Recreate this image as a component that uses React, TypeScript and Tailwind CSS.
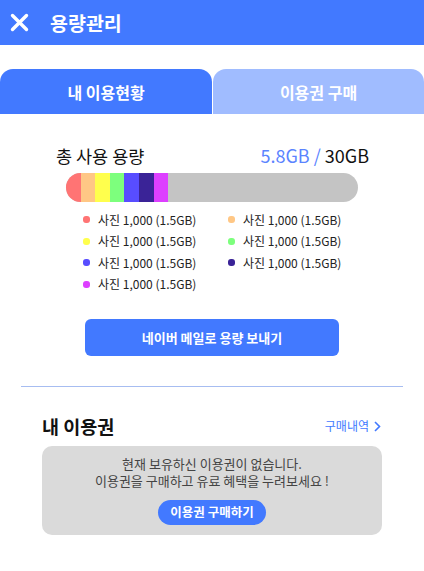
const segments = ["#FF7474", "#FFC785", "#FFFF4D", "#7DFF7D", "#584DFF", "#3A2397", "#DD3FFF"]

const legend = [
  { color: "#FF7474", label: "사진 1,000 (1.5GB)" },
  { color: "#FFC785", label: "사진 1,000 (1.5GB)" },
  { color: "#FFFF4D", label: "사진 1,000 (1.5GB)" },
  { color: "#7DFF7D", label: "사진 1,000 (1.5GB)" },
  { color: "#584DFF", label: "사진 1,000 (1.5GB)" },
  { color: "#3A2397", label: "사진 1,000 (1.5GB)" },
  { color: "#DD3FFF", label: "사진 1,000 (1.5GB)" },
]

export default function App() {
  return (
    <div className="w-[424px] h-[571px] bg-white font-['Noto_Sans_CJK_KR','Noto_Sans',sans-serif] text-[#111]">
      {/* header */}
      <div className="h-[45px] bg-[#4279FF] flex items-center px-[10px]">
        <svg width="19" height="19" viewBox="0 0 19 19" className="shrink-0">
          <path d="M2.5 2.5 L16.5 16.5 M16.5 2.5 L2.5 16.5" stroke="white" strokeWidth="3.4" strokeLinecap="round" />
        </svg>
        <span className="ml-[21px] text-white text-[19.5px] font-bold leading-none">용량관리</span>
      </div>

      {/* tabs */}
      <div className="mt-[24px] flex gap-px">
        <div className="w-[212px] h-[45px] rounded-t-[13px] bg-[#4279FF] flex items-center justify-center text-white text-[16px] font-bold">
          내 이용현황
        </div>
        <div className="flex-1 h-[45px] rounded-t-[13px] bg-[#A0BCFF] flex items-center justify-center text-white text-[16px] font-bold">
          이용권 구매
        </div>
      </div>

      {/* usage */}
      <div className="px-[56px] pt-[32px] flex items-end justify-between leading-none">
        <span className="text-[17.5px]">총 사용 용량</span>
        <span className="text-[18px] mr-[-1px]">
          <span className="text-[#5B84FF]">5.8GB / </span>30GB
        </span>
      </div>
      <div className="ml-[66px] mt-[9px] w-[292px] h-[29px] rounded-full bg-[#C4C4C4] overflow-hidden flex">
        {segments.map((c) => (
          <div key={c} className="w-[14.6px] h-full" style={{ backgroundColor: c }} />
        ))}
      </div>
      <div className="ml-[83px] mt-[7px] grid grid-cols-[145px_1fr] auto-rows-[21.5px]">
        {legend.map((item, i) => (
          <div key={i} className="flex items-center text-[12px] leading-[16px] text-[#222]">
            <span className="w-[7px] h-[7px] rounded-[3px] mr-[8px]" style={{ backgroundColor: item.color }} />
            {item.label}
          </div>
        ))}
      </div>

      <div className="mt-[24px] flex justify-center">
        <button className="w-[254px] h-[37px] rounded-[6px] bg-[#4279FF] text-white text-[13px] font-bold">
          네이버 메일로 용량 보내기
        </button>
      </div>

      <div className="mx-[21px] mt-[30px] border-t border-[#A7BDF1]" />

      {/* my pass */}
      <div className="mx-[42px] mt-[30px] flex items-center justify-between">
        <span className="text-[18.5px] font-bold leading-none">내 이용권</span>
        <span className="flex items-center gap-[5px] text-[12px] text-[#4279FF] leading-none mr-[1px]">
          구매내역
          <svg width="7" height="11" viewBox="0 0 7 11">
            <path d="M1 1 L5.5 5.5 L1 10" stroke="#4279FF" strokeWidth="1.6" fill="none" />
          </svg>
        </span>
      </div>
      <div className="mx-[42px] mt-[10px] h-[89px] rounded-[10px] bg-[#DADADA] flex flex-col items-center pt-[9px] text-[13px] leading-[17.5px] text-[#444]">
        <p>현재 보유하신 이용권이 없습니다.</p>
        <p>이용권을 구매하고 유료 혜택을 누려보세요 !</p>
        <button className="mt-[10px] w-[108px] h-[25px] rounded-full bg-[#4279FF] text-white text-[12.5px] font-bold">
          이용권 구매하기
        </button>
      </div>
    </div>
  )
}
